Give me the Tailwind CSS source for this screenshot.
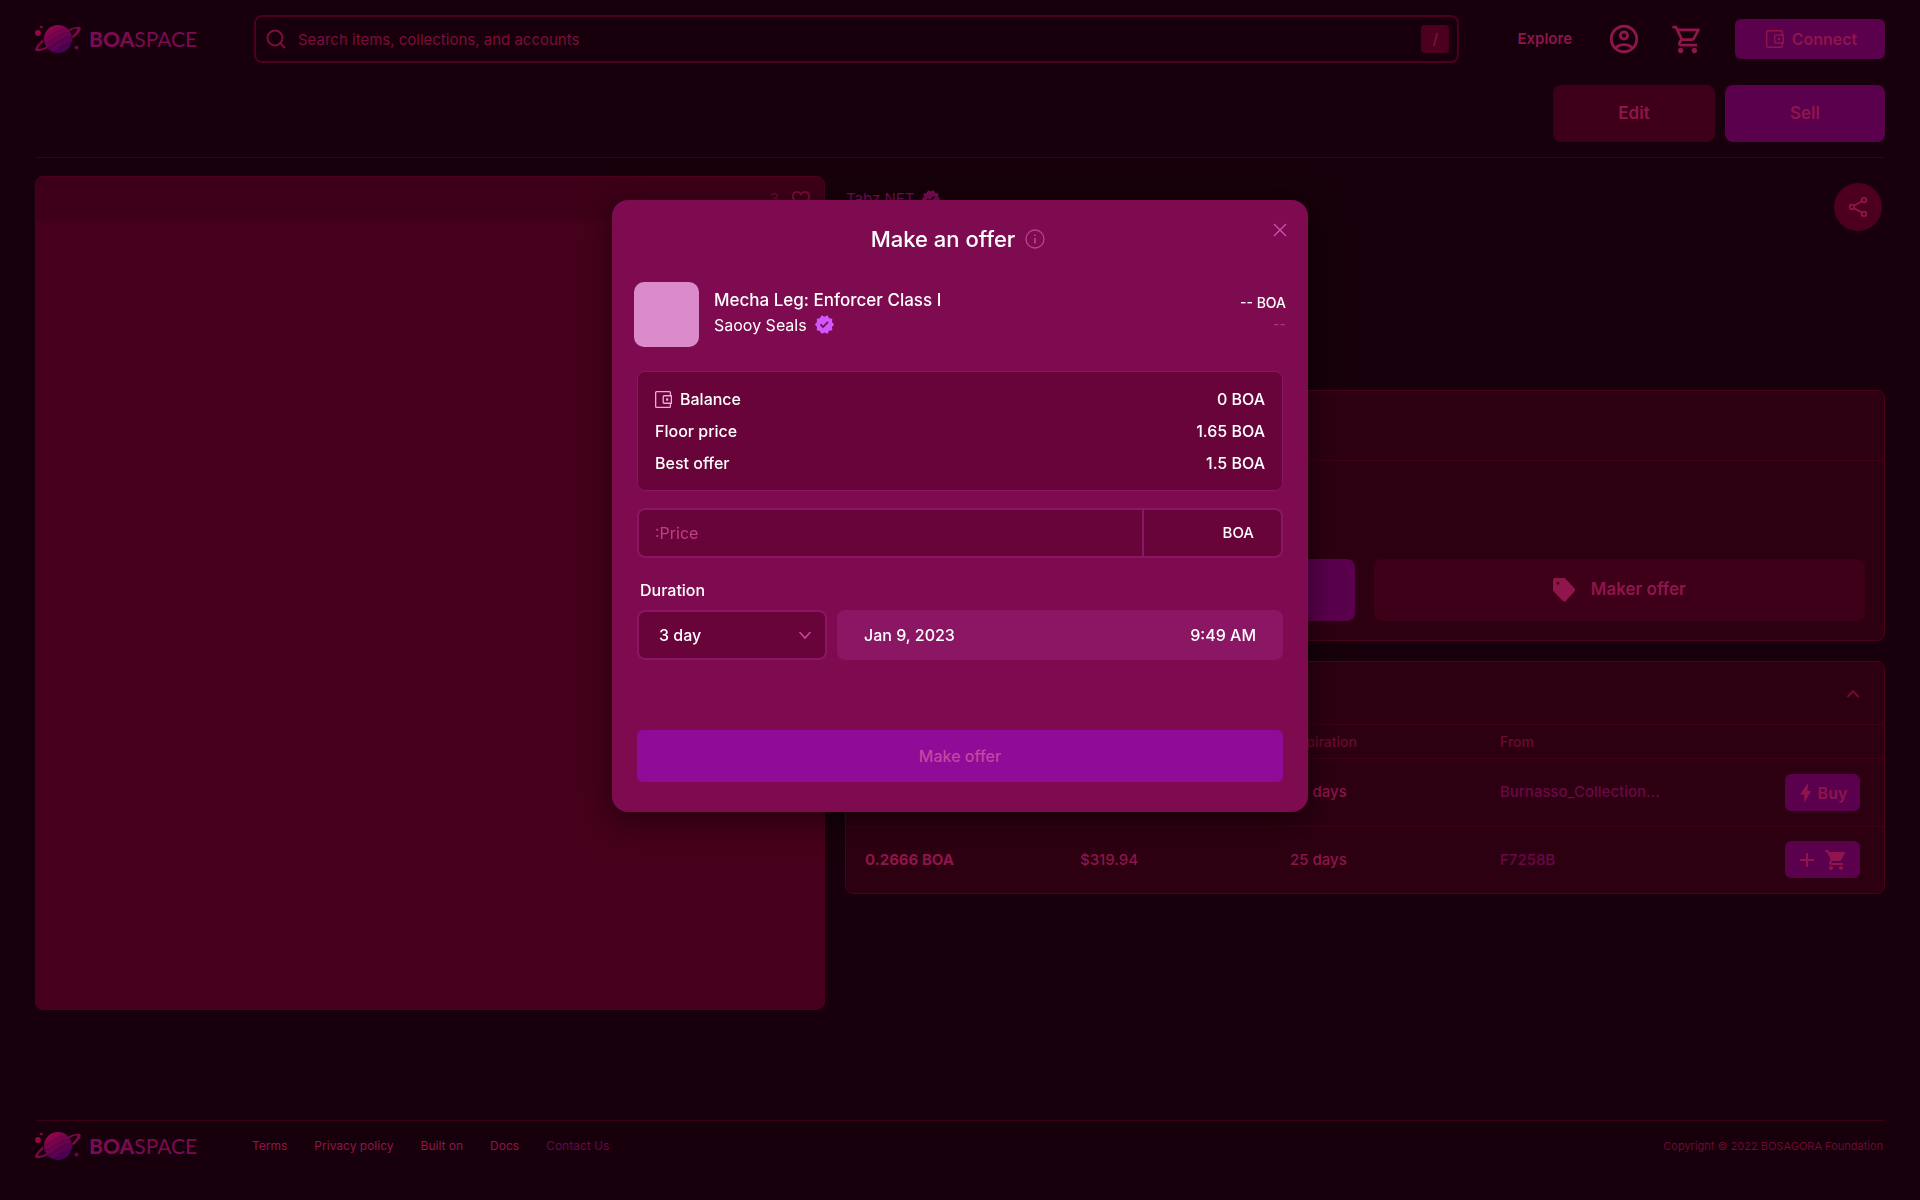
<!DOCTYPE html>
<html lang="en">
<head>
<meta charset="utf-8">
<title>BOASPACE - Make an offer</title>
<script src="https://cdn.jsdelivr.net/npm/@tailwindcss/browser@4"></script>
</head>
<body class="min-h-screen bg-[#17000b] font-[Inter,sans-serif] text-[#8f154c]">

<svg class="absolute size-0" aria-hidden="true">
  <defs>
    <linearGradient id="planet" x1="0.2" y1="0" x2="0.8" y2="1"><stop offset="0" stop-color="#98064a"/><stop offset="0.5" stop-color="#6c034c"/><stop offset="1" stop-color="#3f0058"/></linearGradient>
  </defs>
  <symbol id="logo" viewBox="0 0 46 28">
    <path d="M33 5C39 1.500 44.500 1 45.600 2.800C46.600 4.800 44 8.500 38 13.500L36.800 11.500C40.500 8 42.800 5 42 4C41.200 3 38 4 34.500 6.500Z" fill="#7c064a"/>
    <path d="M8 14.500C3 18.500 -.5 23 .3 25.200C1.300 27.600 8 25.500 14 22.500L12.500 21C7.500 23.500 3.800 24.500 3.300 23.500C2.900 22.300 5.500 19.500 8.500 17Z" fill="#7c064a"/>
    <circle cx="23" cy="14" r="14" fill="url(#planet)"/>
    <path d="M9.500 13C14 14 15 9.500 19 8S26 4 32 4" stroke="#5c034a" stroke-opacity=".4" stroke-width="1.500" fill="none"/>
    <path d="M9.500 18C15 19 16 14 21 12.500S28 6 35.500 8" stroke="#4b0350" stroke-opacity=".5" stroke-width="1.500" fill="none"/>
    <path d="M13 23C19 23.500 19 18 24 17S29 10 36.500 13" stroke="#3b0050" stroke-opacity=".5" stroke-width="1.500" fill="none"/>
    <path d="M19 27C25 26.500 24 22 29 21S32 17 35.500 19" stroke="#2b0050" stroke-opacity=".5" stroke-width="1.500" fill="none"/>
    <circle cx="3" cy="8" r="2.900" fill="#98064a"/><circle cx="6.300" cy="2" r="1.300" fill="#98064a"/><circle cx="41.500" cy="22.500" r="2" fill="#6c034c"/>
  </symbol>
  <symbol id="wallet" viewBox="0 0 18 18">
    <path d="M16.300 5V1.700a1 1 0 0 0-1-1H1.700a1 1 0 0 0-1 1v14.600a1 1 0 0 0 1 1h13.600a1 1 0 0 0 1-1V13M17.300 5H9.700a1 1 0 0 0-1 1v6a1 1 0 0 0 1 1h7.600Z" fill="none" stroke="currentColor" stroke-width="1.400"/>
    <rect x="11.700" y="7.800" width="2.400" height="2.400" rx=".6" fill="currentColor"/>
  </symbol>
  <symbol id="verified" viewBox="0 0 24 24">
    <path fill="currentColor" fill-rule="evenodd" d="M23 12l-2.440-2.780.340-3.680-3.610-.820-1.890-3.180L12 3 8.600 1.540 6.710 4.720l-3.610.810.340 3.680L1 12l2.440 2.780-.340 3.690 3.610.820 1.890 3.180L12 21l3.400 1.460 1.890-3.180 3.610-.820-.340-3.680L23 12zm-12.700 4.300-3.600-3.600 1.500-1.500 2.100 2.100 5-5 1.500 1.500z"/>
  </symbol>
</svg>

<div class="flex min-h-screen flex-col px-[35px]">
  <header class="flex items-center pt-[15px]">
    <a href="#" class="flex w-[219px] shrink-0 items-center gap-2 text-[#7c0a52]" aria-label="BOASPACE">
      <svg class="h-7 w-[46px]"><use href="#logo"/></svg>
      <span class="font-[Lato,sans-serif] text-[21px] leading-7"><b class="font-black">BOA</b>SPACE</span>
    </a>
    <label class="flex h-12 grow items-center rounded-lg border-2 border-[#4c001e] pr-2 pl-[10px]">
      <svg class="size-5 shrink-0" viewBox="0 0 20 20" fill="none" stroke="#7d0d3c" stroke-width="2"><circle cx="9" cy="9" r="7.500"/><path d="M14.500 14.500 19 19"/></svg>
      <span class="sr-only">Search</span>
      <input type="text" placeholder="Search items, collections, and accounts" class="ml-3 h-full grow bg-transparent text-[15px] outline-none placeholder:text-[#7d0d3c]">
      <kbd class="flex size-7 items-center justify-center rounded bg-[#4c001e] font-[Inter,sans-serif] text-[15px]">/</kbd>
    </label>
    <nav class="ml-[58px] flex items-center">
      <a href="#" class="text-[15px] font-semibold">Explore</a>
      <button class="ml-[35px]" aria-label="Account"><svg class="size-[34px]" viewBox="0 0 24 24" fill="currentColor"><path d="M12 2C6.480 2 2 6.480 2 12s4.480 10 10 10 10-4.480 10-10S17.520 2 12 2zM7.350 18.500C8.660 17.560 10.260 17 12 17s3.340.560 4.650 1.500C15.340 19.440 13.740 20 12 20s-3.340-.560-4.650-1.500zm10.790-1.380C16.450 15.800 14.320 15 12 15s-4.450.800-6.140 2.120C4.700 15.730 4 13.950 4 12c0-4.420 3.580-8 8-8s8 3.580 8 8c0 1.950-.700 3.730-1.860 5.120zM12 6c-1.930 0-3.500 1.570-3.500 3.500S10.070 13 12 13s3.500-1.570 3.500-3.500S13.930 6 12 6zm0 5c-.830 0-1.500-.670-1.500-1.500S11.170 8 12 8s1.500.670 1.500 1.500S12.830 11 12 11z"/></svg></button>
      <button class="ml-[30px]" aria-label="Cart"><svg class="size-[33px]" viewBox="0 0 24 24" fill="currentColor"><path d="M15.550 13c.750 0 1.410-.410 1.750-1.030l3.580-6.490C21.250 4.820 20.770 4 20.010 4H5.210l-.940-2H1v2h2l3.600 7.590-1.350 2.440C4.520 15.370 5.480 17 7 17h12v-2H7l1.100-2h7.450zM6.160 6h12.150l-2.760 5H8.530L6.160 6zM7 18c-1.100 0-1.990.900-1.990 2S5.900 22 7 22s2-.900 2-2-.900-2-2-2zm10 0c-1.100 0-1.990.900-1.990 2s.890 2 1.990 2 2-.900 2-2-.900-2-2-2z"/></svg></button>
      <button class="ml-[31px] flex h-10 w-[150px] items-center justify-center gap-2 rounded-md bg-[#5a004c] pl-[3px] font-semibold"><svg class="size-[18px]"><use href="#wallet"/></svg>Connect</button>
    </nav>
  </header>

  <div class="mt-[22px] flex justify-end gap-[10px] border-b border-[#3a0014] pb-[15px] text-[17px] font-semibold">
    <button class="h-[57px] w-[162px] rounded-lg bg-[#3d0018]">Edit</button>
    <button class="h-[57px] w-40 rounded-lg bg-[#5a004c]">Sell</button>
  </div>

  <main class="mt-[18px] grid grid-cols-[790fr_1040fr] gap-5">
    <section class="flex min-h-[834px] flex-col overflow-hidden rounded-lg border border-[#4c001e] bg-[#46001b]">
      <div class="flex h-11 items-center justify-end gap-3 bg-[#3d0018] pr-[13px]">
        <span class="text-[15px] text-[#6f0a34]">3</span>
        <svg class="size-5 text-[#7d0d3c]" viewBox="0 0 24 24" fill="none" stroke="currentColor" stroke-width="2.200"><path d="M12 21.500 4 13.500C0 9 3 3.500 7.500 3.500c2 0 3.500 1.100 4.500 3 1-1.900 2.500-3 4.500-3 4.500 0 7.500 5.500 3.500 10Z"/></svg>
      </div>
    </section>

    <div>
      <div class="flex h-[214px] items-start justify-between">
        <a href="#" class="mt-[13px] ml-px flex items-center gap-[7px] text-[15px] leading-5 text-[#7c0a52]">Tabz NFT <svg class="size-5"><use href="#verified"/></svg></a>
        <button class="mt-[7px] mr-[3px] flex size-12 items-center justify-center rounded-full bg-[#4c001e]" aria-label="Share"><svg class="size-5" viewBox="0 0 20 20" fill="none" stroke="currentColor" stroke-width="1.800"><circle cx="16" cy="3" r="2.300"/><circle cx="4" cy="10" r="2.300"/><circle cx="16" cy="17" r="2.300"/><path d="m6 8.800 8-4.600M6 11.200l8 4.600"/></svg></button>
      </div>
      <section class="h-[251px] rounded-lg border border-[#4c001e] bg-[#2d0011]">
        <div class="h-[70px] border-b border-[#3d0018]"></div>
        <div class="mt-[98px] grid grid-cols-2 gap-[19px] pr-[19px] pl-[17px]">
          <button class="h-[62px] rounded-lg bg-[#5a004c]" aria-label="Buy now"></button>
          <button class="flex h-[62px] items-center justify-center gap-4 rounded-lg bg-[#3d0018] text-[17px] font-semibold"><svg class="h-6 w-[22px]" viewBox="2 2 20 21" preserveAspectRatio="none" fill="currentColor"><path fill-rule="evenodd" d="M3.500 2H12a2 2 0 0 1 1.400.6l8 8.400a2 2 0 0 1 0 2.800l-7.600 8.400a2 2 0 0 1-2.800 0l-8.400-8.400A2 2 0 0 1 2 12V3.500A1.500 1.500 0 0 1 3.500 2ZM6.500 5.200a1.300 1.300 0 1 0 0 2.600 1.300 1.300 0 0 0 0-2.600Z"/></svg>Maker offer</button>
        </div>
      </section>
      <section class="mt-5 rounded-lg border border-[#4c001e] bg-[#2d0011]">
        <div class="flex h-[62px] items-center justify-end pt-[2px] pr-[23px]">
          <button aria-label="Collapse"><svg class="size-4" viewBox="0 0 16 16" fill="none" stroke="#6f0a38" stroke-width="2"><path d="m2.500 11 5.500-6 5.500 6"/></svg></button>
        </div>
        <table class="w-full table-fixed text-left text-[15px]">
          <thead>
            <tr class="h-[34px] border-t border-[#3d0018] text-sm text-[#6b0a32]">
              <th class="w-[234px] pl-[19px] font-medium">Price</th><th class="w-[210px] font-medium">USD Price</th><th class="w-[210px] font-medium">Expiration</th><th class="font-medium">From</th><th class="w-[99px]"></th>
            </tr>
          </thead>
          <tbody>
            <tr class="h-[68px] border-t border-[#3d0018]">
              <td class="pl-[19px] font-bold">0.2666 BOA</td><td class="font-medium">$319.94</td><td class="font-medium">25 days</td>
              <td><a href="#" class="font-medium text-[#6b0747]">Burnasso_Collection...</a></td>
              <td><button class="flex h-[37px] w-[75px] items-center justify-center gap-1 rounded-md bg-[#5a004c] text-base font-semibold"><svg class="h-5 w-4" viewBox="0 0 16 20" fill="currentColor"><path d="M10 0 2 11.500h4.500L6 20l7-12H9.500Z"/></svg>Buy</button></td>
            </tr>
            <tr class="h-[66px] border-t border-[#3d0018]">
              <td class="pl-[19px] font-bold">0.2666 BOA</td><td class="font-medium">$319.94</td><td class="font-medium">25 days</td>
              <td><a href="#" class="font-medium text-[#6b0747]">F7258B</a></td>
              <td><button class="flex h-[37px] w-[75px] items-center justify-center gap-2 rounded-md bg-[#5a004c]" aria-label="Add to cart"><svg class="size-[18px]" viewBox="0 0 18 18" stroke="currentColor" stroke-width="2"><path d="M9 2v14M2 9h14"/></svg><svg class="size-6" viewBox="0 0 24 24" fill="currentColor"><path d="M7 18c-1.100 0-1.990.900-1.990 2S5.900 22 7 22s2-.900 2-2-.900-2-2-2zM1 2v2h2l3.600 7.590-1.350 2.450c-.160.280-.250.610-.250.960 0 1.100.900 2 2 2h12v-2H7.420c-.140 0-.250-.110-.250-.250l.030-.120.900-1.630h7.450c.750 0 1.410-.410 1.750-1.030l3.580-6.490A1 1 0 0 0 20 4H5.210l-.940-2H1zm16 16c-1.100 0-1.990.900-1.990 2s.890 2 1.990 2 2-.900 2-2-.900-2-2-2z"/></svg></button></td>
            </tr>
          </tbody>
        </table>
      </section>
    </div>
  </main>

  <footer class="mt-[110px] flex items-center border-t border-[#3a0014] pt-[11px] text-xs">
    <a href="#" class="flex w-[217px] items-center gap-2 text-[#7c0a52]" aria-label="BOASPACE">
      <svg class="h-7 w-[46px]"><use href="#logo"/></svg>
      <span class="font-[Lato,sans-serif] text-[21px] leading-7"><b class="font-black">BOA</b>SPACE</span>
    </a>
    <nav class="flex gap-[27px]"><a href="#">Terms</a><a href="#">Privacy policy</a><a href="#">Built on</a><a href="#">Docs</a><a href="#" class="text-[#6b0747]">Contact Us</a></nav>
    <p class="ml-auto pt-px pr-[2px] text-[11px] text-[#6b0a32]">Copyright © 2022 BOSAGORA Foundation</p>
  </footer>
</div>

<div class="fixed inset-0 flex items-start justify-center pt-[200px]">
  <form role="dialog" aria-labelledby="offer-title" class="relative w-[696px] rounded-2xl bg-[#7e0b50] px-[25px] pt-[25px] pb-[30px] text-base font-medium text-white shadow-[0_8px_32px_rgba(0,0,0,0.5)]">
    <button type="button" aria-label="Close" class="absolute top-[23px] right-[21px] text-[#d14fae]"><svg class="size-[14px]" viewBox="0 0 14 14" stroke="currentColor" stroke-width="1.300"><path d="m1 1 12 12M13 1 1 13"/></svg></button>
    <div class="flex items-center justify-center gap-[10px] pr-1">
      <h1 id="offer-title" class="text-[22px] leading-7">Make an offer</h1>
      <svg class="size-5 text-[#c23f92]" viewBox="0 0 20 20" fill="none" stroke="currentColor" stroke-width="1.300"><circle cx="10" cy="10" r="9"/><path d="M10 9v5.500M10 5.500V7" stroke-width="1.600"/></svg>
    </div>
    <div class="-mx-[3px] mt-[29px] flex h-[65px] items-center">
      <div class="size-[65px] rounded-[10px] bg-[#db8acb]"></div>
      <div class="ml-[15px] pb-1">
        <p class="text-[17px] leading-6">Mecha Leg: Enforcer Class I</p>
        <p class="flex items-center gap-[7px] leading-[26px] font-normal">Saooy Seals <svg class="size-[21px] text-[#cf57ff]"><use href="#verified"/></svg></p>
      </div>
      <div class="ml-auto pb-1 text-right text-sm"><p class="leading-[22px]">-- BOA</p><p class="leading-5 text-[#b02c80]">--</p></div>
    </div>
    <dl class="mt-6 flex flex-col gap-2 rounded-lg border border-[#8a1664] bg-[#68043a] px-[17px] py-[15px] leading-6">
      <div class="flex justify-between"><dt class="flex items-center gap-2"><svg class="size-[17px] text-[#f0a8dc]"><use href="#wallet"/></svg>Balance</dt><dd>0 BOA</dd></div>
      <div class="flex justify-between"><dt>Floor price</dt><dd>1.65 BOA</dd></div>
      <div class="flex justify-between"><dt>Best offer</dt><dd>1.5 BOA</dd></div>
    </dl>
    <div class="mt-[17px] flex h-[50px] rounded-lg border-2 border-[#8a1664] bg-[#68043a]">
      <label for="price" class="sr-only">Price</label>
      <input id="price" type="text" placeholder=":Price" class="grow bg-transparent px-4 font-normal outline-none placeholder:text-[#bf4088]">
      <span class="flex w-[139px] items-center justify-end border-l-2 border-[#8a1664] pr-[27px] text-[15px]">BOA</span>
    </div>
    <label for="duration" class="mt-5 ml-[3px] block leading-6">Duration</label>
    <div class="mt-2 flex gap-[10px]">
      <div class="relative w-[190px]">
        <select id="duration" class="h-[50px] w-full appearance-none rounded-lg border-2 border-[#8a1664] bg-[#68043a] px-5"><option>3 day</option></select>
        <svg class="pointer-events-none absolute top-[17px] right-[14px] size-4" viewBox="0 0 16 16" fill="none" stroke="#c8489a" stroke-width="1.600"><path d="m2.500 5 5.500 6 5.500-6"/></svg>
      </div>
      <div class="flex h-[50px] grow items-center justify-between rounded-lg bg-[#8a1664] px-[27px]">
        <input type="text" aria-label="End date" value="Jan 9, 2023" class="w-32 bg-transparent outline-none">
        <input type="text" aria-label="End time" value="9:49 AM" class="w-24 bg-transparent text-right outline-none">
      </div>
    </div>
    <button type="submit" class="mt-[70px] h-[52px] w-full rounded-md bg-[#900b98] text-[#c2479f]">Make offer</button>
  </form>
</div>
</body>
</html>
